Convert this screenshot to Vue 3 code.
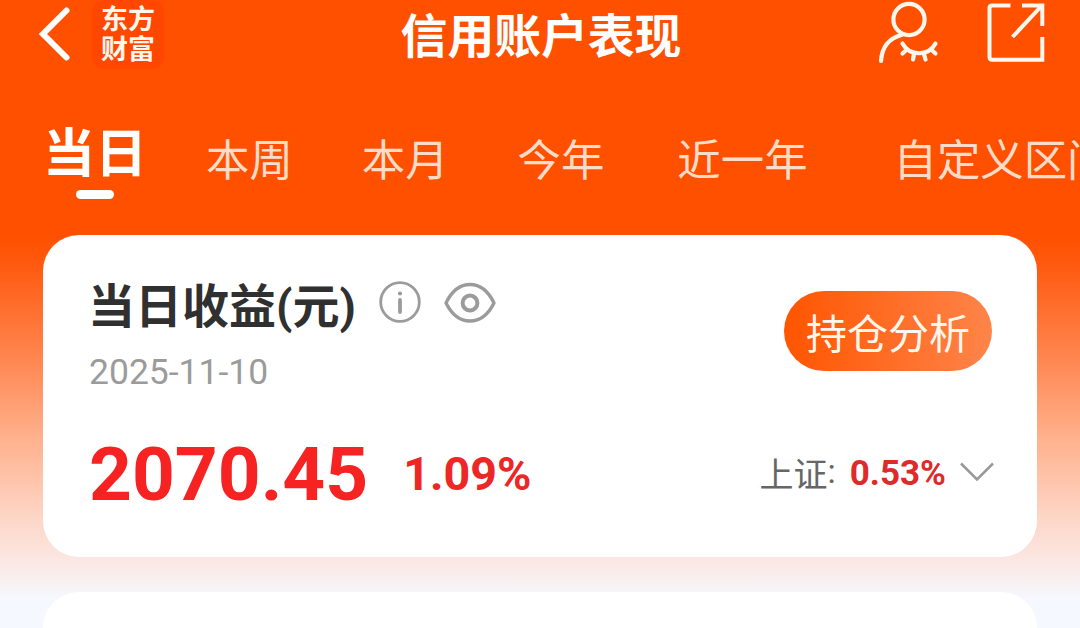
<template>
  <div class="page">
    <header class="navbar">
      <div class="nav-left">
        <svg class="back" viewBox="0 0 32 54" fill="none" stroke="#fff" stroke-width="6">
          <path d="M28.500 3.500 L5 27 L28.500 50.500" stroke-linecap="round" stroke-linejoin="miter" />
        </svg>
        <div class="brand">
          <span>东方</span>
          <span>财富</span>
        </div>
      </div>
      <h1 class="title">信用账户表现</h1>
      <div class="nav-right">
        <!-- 隐藏账户 -->
        <svg class="user" viewBox="0 0 62 64" fill="none" stroke="#fff6ee" stroke-width="4.200" stroke-linecap="round">
          <circle cx="31" cy="19.500" r="15.600" />
          <path d="M23.500 35 C12 38 4 46 3 61" />
          <path d="M24.500 43.500 C31.500 56.500 50.500 56.500 57.500 43.500" />
          <path d="M29 49.500 L24.500 53.500 M36 54 L35 59.500 M46 54 L47.500 59.500 M53 49.500 L57.500 53.500" />
        </svg>
        <!-- 分享 -->
        <svg class="share" viewBox="0 0 58 60" fill="none" stroke="#fff6ee" stroke-width="4">
          <path d="M23.500 3.500 H5 Q2.500 3.500 2.500 6 V55 Q2.500 57.800 5 57.800 H55.300 V35" />
          <path d="M35 3.500 H55.300 V24 M54 4.500 L25.500 35" />
        </svg>
      </div>
    </header>

    <nav class="tabs">
      <div
        v-for="t in tabs"
        :key="t.key"
        class="tab"
        :class="[t.key, { active: t.key === current }]"
        @click="current = t.key"
      >{{ t.label }}</div>
    </nav>

    <section class="card">
      <div class="card-top">
        <div>
          <div class="heading">
            <h2>当日收益(元)</h2>
            <svg class="info" viewBox="0 0 42 42" fill="none" stroke="#9b9b9b">
              <circle cx="21" cy="21" r="19.300" stroke-width="2.800" />
              <path d="M21 19 V31" stroke-width="3.800" stroke-linecap="round" />
              <circle cx="21" cy="12.500" r="2.100" fill="#9b9b9b" stroke="none" />
            </svg>
            <svg class="eye" viewBox="0 0 52 42" fill="none" stroke="#9b9b9b">
              <path d="M2 21 C14 -3.600 38 -3.600 50 21 C38 45 14 45 2 21 Z" stroke-width="3.400" stroke-linejoin="round" />
              <circle cx="26" cy="21" r="7.400" stroke-width="4" />
            </svg>
          </div>
          <div class="date">2025-11-10</div>
        </div>
        <button class="analyze">持仓分析</button>
      </div>
      <div class="card-bottom">
        <span class="profit">2070.45</span>
        <span class="rate">1.09%</span>
        <div class="index">
          <span class="index-name">上证<span class="colon">:</span></span>
          <span class="index-rate">0.53%</span>
          <svg class="arrow" viewBox="0 0 34 20" fill="none" stroke="#999" stroke-width="2.500">
            <path d="M1 1.500 L17 17.500 L33 1.500" />
          </svg>
        </div>
      </div>
    </section>

    <section class="card next"></section>
  </div>
</template>

<script setup>
import { ref } from 'vue'

const current = ref('day')

const tabs = [
  { key: 'day', label: '当日' },
  { key: 'week', label: '本周' },
  { key: 'month', label: '本月' },
  { key: 'year', label: '今年' },
  { key: 'last', label: '近一年' },
  { key: 'custom', label: '自定义区间' },
]
</script>

<style>
body {
  margin: 0;
  overflow: hidden;
}
</style>

<style scoped>
.page {
  width: 1080px;
  height: 628px;
  overflow: hidden;
  font-family: Roboto, 'Noto Sans CJK SC', sans-serif;
  background: linear-gradient(to bottom, #ff5000 0, #ff5000 236px, #ff5a0f 265px, #ff8650 358px, #ffb28e 440px, #fdd7c8 520px, #fbe7e3 560px, #f5f9ff 600px);
}
.navbar {
  display: grid;
  grid-template-columns: 1fr auto 1fr;
  height: 72px;
  padding: 0 36px 0 38px;
}
.nav-left {
  display: flex;
  align-items: flex-start;
}
.back {
  width: 32px;
  height: 54px;
  margin-top: 7px;
}
.brand {
  display: flex;
  flex-direction: column;
  align-items: center;
  width: 72px;
  height: 69px;
  margin-left: 22px;
  padding-top: 5px;
  box-sizing: border-box;
  border-radius: 12px;
  background: #ff4700;
  color: #fff6ee;
  font-size: 27px;
  font-weight: 700;
  line-height: 30px;
}
.title {
  margin: 0;
  color: #fff;
  font-size: 46.8px;
  font-weight: 700;
  line-height: 74px;
}
.nav-right {
  display: flex;
  justify-content: flex-end;
}
.user {
  width: 62px;
  height: 64px;
}
.share {
  width: 58px;
  height: 60px;
  margin: 2px -1px 0 47px;
}

.tabs {
  display: flex;
  height: 163px;
  padding-left: 43px;
  white-space: nowrap;
}
.tab {
  flex: none;
  margin-right: 69px;
  color: #ffdcc8;
  font-size: 43.4px;
  line-height: 180px;
}
.tab.active {
  display: flex;
  flex-direction: column;
  align-items: center;
  margin-right: 59px;
  color: #fff;
  font-size: 52px;
  font-weight: 700;
  line-height: 80px;
  padding-top: 43px;
}
.tab.active::after {
  content: '';
  width: 38px;
  height: 9px;
  margin-top: -5px;
  border-radius: 5px;
  background: #fff;
}
.tab.year { margin-right: 73px; }
.tab.last { margin-right: 86px; }

.card {
  height: 322px;
  margin: 0 43px;
  box-sizing: border-box;
  padding: 44px 43px 0 46px;
  border-radius: 36px;
  background: #fff;
}
.card.next {
  margin-top: 35px;
}
.card-top {
  display: flex;
  justify-content: space-between;
  height: 140px;
}
.heading {
  display: flex;
  align-items: center;
  height: 50px;
}
h2 {
  margin: 5px 0 0 -1px;
  color: #303030;
  font-size: 47px;
  font-weight: 700;
  line-height: 50px;
}
.info {
  width: 42px;
  height: 42px;
  margin: -4px 0 0 23px;
}
.eye {
  width: 52px;
  height: 42px;
  margin: -3px 0 0 23px;
}
.date {
  margin-top: 22px;
  color: #9b9b9b;
  font-size: 35.5px;
  line-height: 42px;
}
.analyze {
  width: 208px;
  height: 80px;
  margin: 12px 2px 0 0;
  padding: 6px 0 0;
  border: 0;
  border-radius: 40px;
  background: linear-gradient(to right, #ff5500, #ff844a);
  color: #fff6ee;
  font-family: inherit;
  font-size: 41px;
  line-height: 76px;
}
.card-bottom {
  display: flex;
  align-items: center;
  height: 110px;
}
.profit {
  color: #f72222;
  font-size: 74.8px;
  font-weight: 700;
}
.rate {
  margin: 0 0 0 35px;
  color: #ed2626;
  font-size: 46.6px;
  font-weight: 700;
}
.index {
  display: flex;
  align-items: center;
  margin: -4px 0 0 auto;
}
.index-name {
  color: #666;
  font-size: 34px;
}
.colon {
  vertical-align: 4px;
  line-height: 1;
}
.index-rate {
  margin: 2px 0 0 14px;
  color: #de2a2a;
  font-size: 35px;
  font-weight: 700;
}
.arrow {
  width: 34px;
  height: 20px;
  margin-left: 14px;
}
</style>
